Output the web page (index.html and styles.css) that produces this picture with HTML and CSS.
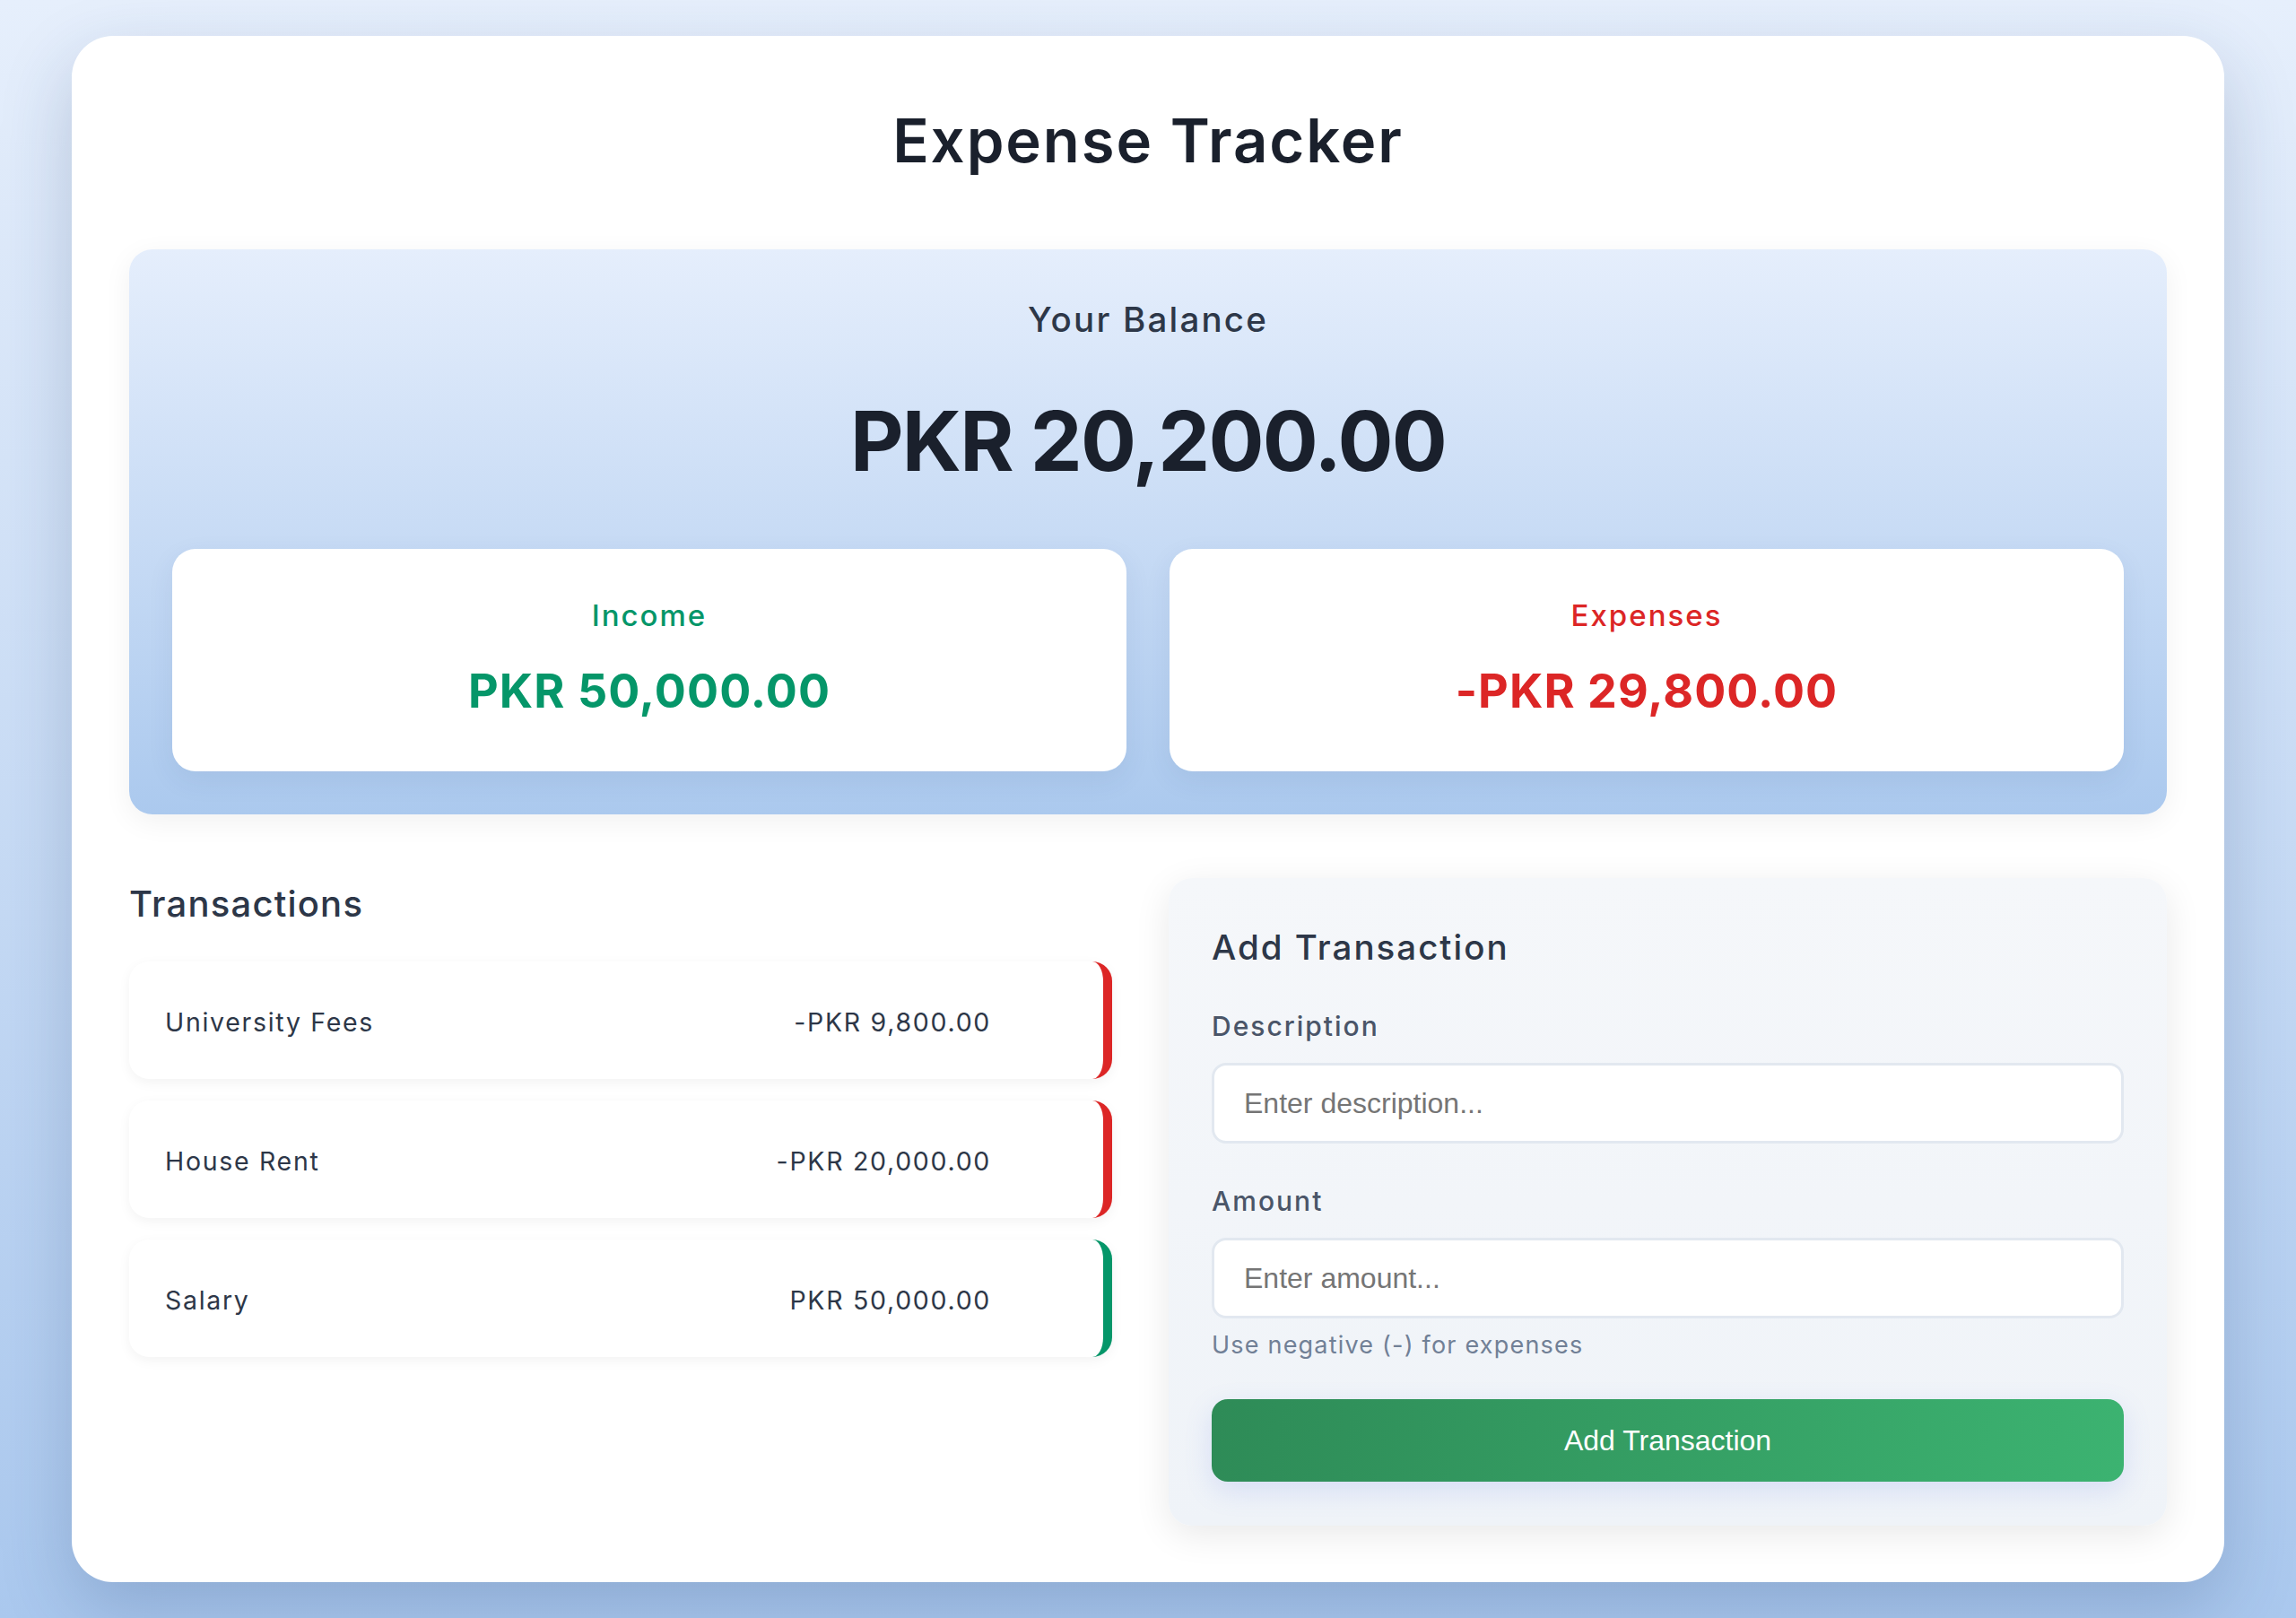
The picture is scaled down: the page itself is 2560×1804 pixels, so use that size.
FILE: index.html
```html
<!DOCTYPE html>
<html lang="en">
<head>
<meta charset="UTF-8">
<title>Expense Tracker</title>
<link rel="stylesheet" href="styles.css">
</head>
<body>
<div class="container">
  <h1 class="title">Expense Tracker</h1>

  <section class="balance">
    <h4 class="balance-label">Your Balance</h4>
    <div class="balance-amount">PKR 20,200.00</div>
    <div class="summary">
      <div class="summary-card">
        <h4 class="summary-label income">Income</h4>
        <p class="summary-value income">PKR 50,000.00</p>
      </div>
      <div class="summary-card">
        <h4 class="summary-label expense">Expenses</h4>
        <p class="summary-value expense">-PKR 29,800.00</p>
      </div>
    </div>
  </section>

  <div class="columns">
    <section class="history">
      <h3 class="section-title">Transactions</h3>
      <ul class="list">
        <li class="item minus"><span>University Fees</span><span>-PKR 9,800.00</span></li>
        <li class="item minus"><span>House Rent</span><span>-PKR 20,000.00</span></li>
        <li class="item plus"><span>Salary</span><span>PKR 50,000.00</span></li>
      </ul>
    </section>

    <section class="form-panel">
      <h3 class="form-title">Add Transaction</h3>
      <form class="form">
        <label class="label" for="text">Description</label>
        <input class="input" type="text" id="text" placeholder="Enter description...">
        <label class="label label-amount" for="amount">Amount</label>
        <input class="input" type="number" id="amount" placeholder="Enter amount...">
        <small class="hint">Use negative (-) for expenses</small>
        <button class="btn" type="button">Add Transaction</button>
      </form>
    </section>
  </div>
</div>
</body>
</html>
```

FILE: styles.css
```css
* { box-sizing: border-box; }

html, body { margin: 0; padding: 0; }

body {
  font-family: "Inter", "Open Sans", sans-serif;
  background: linear-gradient(180deg, #e6effc 0%, #aac8ee 100%);
  min-height: 100vh;
  padding: 40px 80px;
  color: #2d3748;
}

.container {
  background: #ffffff;
  border-radius: 46px;
  padding: 64px 64px 63px;
  box-shadow: 0 30px 80px rgba(30, 60, 110, 0.22);
}

.title {
  margin: 12.5px 0 0;
  text-align: center;
  font-size: 67px;
  line-height: 80px;
  font-weight: 600;
  color: #1a202c;
  letter-spacing: 1.9px;
}

.balance {
  margin-top: 81.5px;
  height: 630px;
  padding: 54px 48px 48px;
  border-radius: 26px;
  background: linear-gradient(180deg, #e5eefc 0%, #abc9ee 100%);
  box-shadow: 0 8px 32px rgba(0, 0, 0, 0.06);
  text-align: center;
}

.balance-label {
  margin: 0;
  font-size: 38.5px;
  line-height: 48px;
  font-weight: 500;
  color: #2d3748;
  letter-spacing: 2.2px;
}

.balance-amount {
  margin-top: 61.5px;
  font-size: 92px;
  line-height: 100px;
  font-weight: 700;
  color: #1a202c;
  letter-spacing: -1.8px;
}

.summary {
  margin-top: 70.5px;
  display: grid;
  grid-template-columns: 1fr 1fr;
  gap: 48px;
}

.summary-card {
  height: 248px;
  background: #ffffff;
  border-radius: 26px;
  padding-top: 54px;
  box-shadow: 0 10px 30px rgba(40, 70, 120, 0.08);
}

.summary-label {
  margin: 0;
  font-size: 33px;
  line-height: 40px;
  font-weight: 500;
  letter-spacing: 2px;
}

.summary-value {
  margin: 35px 0 0;
  font-size: 52px;
  line-height: 60px;
  font-weight: 700;
  letter-spacing: 1.1px;
}

.income { color: #059669; }
.expense { color: #dc2626; }

.columns {
  margin-top: 71px;
  display: grid;
  grid-template-columns: 1096px 1113px;
  column-gap: 63px;
  align-items: start;
}

.section-title {
  margin: 3.5px 0 0;
  font-size: 40px;
  line-height: 50px;
  font-weight: 500;
  color: #2d3748;
  letter-spacing: 1.2px;
}

.list {
  list-style: none;
  margin: 39.5px 0 0;
  padding: 0;
}

.item {
  height: 131px;
  margin-bottom: 24px;
  background: #ffffff;
  border-radius: 22px;
  display: flex;
  align-items: center;
  justify-content: space-between;
  padding: 3px 125px 0 40px;
  font-size: 28.5px;
  letter-spacing: 1.7px;
  color: #2d3748;
  box-shadow: 0 4px 14px rgba(0, 0, 0, 0.05);
}

.item.minus { border-right: 10px solid #dc2626; }
.item.plus { border-right: 10px solid #059669; }

.form-panel {
  height: 722px;
  padding: 48px;
  border-radius: 26px;
  background: linear-gradient(180deg, #f5f7fa 0%, #eff3f8 100%);
  box-shadow: 0 10px 40px rgba(0, 0, 0, 0.09);
}

.form-title {
  margin: 4px 0 0;
  font-size: 38.5px;
  line-height: 50px;
  font-weight: 500;
  color: #2d3748;
  letter-spacing: 2px;
}

.form {
  display: flex;
  flex-direction: column;
}

.label {
  display: block;
  margin-top: 43px;
  font-size: 30px;
  line-height: 40px;
  font-weight: 500;
  color: #4a5568;
  letter-spacing: 2px;
}

.label-amount { margin-top: 44px; }

.input {
  margin-top: 21px;
  height: 90px;
  width: 100%;
  padding: 0 33px;
  border: 3px solid #e2e8f0;
  border-radius: 16px;
  background: #ffffff;
  font-family: "Liberation Sans", Arial, sans-serif;
  font-size: 32px;
  color: #2d3748;
  outline: none;
}

.input::placeholder { color: #757575; }

.hint {
  display: block;
  margin-top: 11.5px;
  font-size: 27px;
  line-height: 36px;
  color: #718096;
  letter-spacing: 1.2px;
}

.btn {
  margin-top: 42.5px;
  height: 92px;
  width: 100%;
  border: none;
  border-radius: 18px;
  background: linear-gradient(100deg, #2e8b57 0%, #3cb371 100%);
  color: #ffffff;
  font-family: "Liberation Sans", Arial, sans-serif;
  font-size: 32px;
  box-shadow: 0 10px 30px rgba(102, 126, 234, 0.18);
  cursor: pointer;
}
```
